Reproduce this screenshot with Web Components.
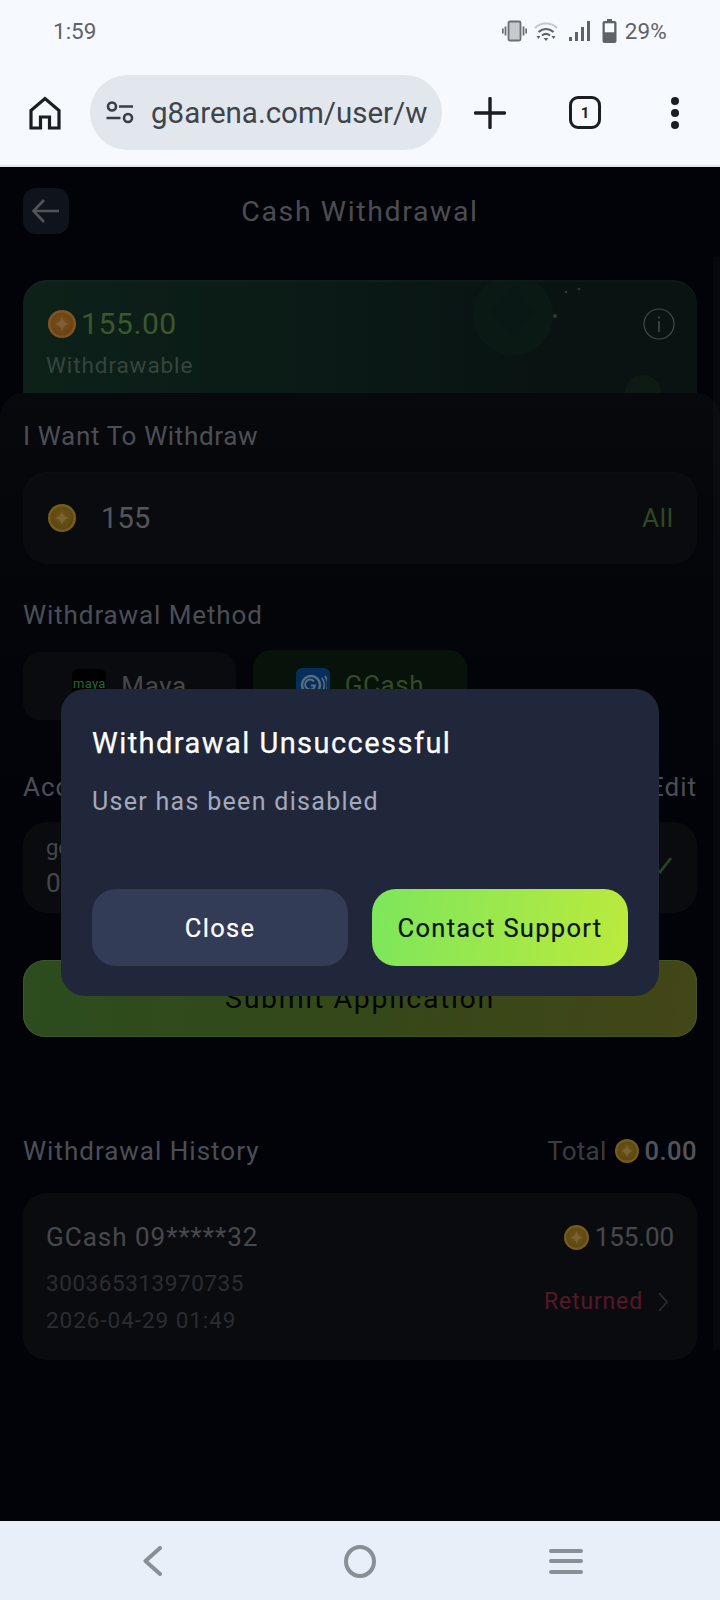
<!DOCTYPE html>
<html lang="en"><head><meta charset="utf-8"><title>Cash Withdrawal</title>
<style>
html,body{margin:0;padding:0;height:1600px;background:#040612;font-family:Roboto,"Noto Sans",sans-serif;overflow:hidden}
</style></head>
<body>
<phone-shell>
  <status-strip slot="status" time="1:59" battery="29%"></status-strip>
  <browser-bar slot="browser" url="g8arena.com/user/w"></browser-bar>
  <withdraw-page slot="page"></withdraw-page>
  <alert-dialog slot="dialog" heading="Withdrawal Unsuccessful" message="User has been disabled"></alert-dialog>
  <nav-strip slot="nav"></nav-strip>
</phone-shell>
<script>
const def=(name,html)=>{customElements.define(name,class extends HTMLElement{
  connectedCallback(){ if(this.shadowRoot) return; const r=this.attachShadow({mode:'open'});
    r.innerHTML=typeof html==='function'?html(this):html; }
});};

let coinId=0;
def('g-coin',el=>{const s=el.getAttribute('size')||28;const id='c'+(++coinId);const v=el.getAttribute('tone')||'gold';
 const a=v==='orange'?'#fcaa48':'#e8b83c', b=v==='orange'?'#f0a238':'#d8aa34', c=v==='orange'?'#d48020':'#b88c1c', d=v==='orange'?'#f8c078':'#eec864';
 return `<style>:host{display:inline-flex;flex:none;width:${s}px;height:${s}px}svg{width:100%;height:100%;display:block}</style>
 <svg viewBox="0 0 28 28"><defs><radialGradient id="${id}" cx=".5" cy=".45" r=".6"><stop offset="0" stop-color="${b}"/><stop offset="1" stop-color="${c}"/></radialGradient></defs>
 <circle cx="14" cy="14" r="14" fill="${a}"/><circle cx="14" cy="14" r="11.500" fill="url(#${id})"/>
 <path d="M14 7C15 11 17 13 21 14C17 15 15 17 14 21C13 17 11 15 7 14C11 13 13 11 14 7Z" fill="${d}"/></svg>`;});

def('phone-shell',`<style>
:host{display:flex;flex-direction:column;height:1600px;width:720px}
.main{flex:1;position:relative;overflow:hidden;min-height:0}
.scrim{position:absolute;inset:0;background:rgba(0,0,0,.5);display:flex;align-items:center;justify-content:center}
.bar{position:absolute;right:0;top:90px;bottom:171px;width:7px;background:rgba(255,255,255,.025)}
</style>
<slot name="status"></slot><slot name="browser"></slot>
<div class="main"><slot name="page"></slot><div class="scrim"><div class="bar"></div><slot name="dialog"></slot></div></div>
<slot name="nav"></slot>`);

def('status-strip',el=>`<style>
:host{display:flex;align-items:center;height:62px;background:#f6f9fe;font:400 22.500px Roboto,sans-serif;color:#5f6368;box-sizing:border-box;padding:0 53px 0 53px}
.sp{flex:1}.i{display:flex;align-items:center}svg{display:block}
.t{margin-left:8px;letter-spacing:.2px}
</style>
<span>${el.getAttribute('time')}</span><span class="sp"></span>
<span class="i">
<svg width="25" height="24" viewBox="0 0 25 24" style="margin-right:7px"><rect x="6.500" y="2.500" width="12" height="19" rx="1.500" fill="#c6c9cd" stroke="#6b6f74" stroke-width="1.800"/><path d="M3.500 7.500v9M.8 9.500v5M21.500 7.500v9M24.200 9.500v5" stroke="#6b6f74" stroke-width="1.800"/></svg>
<svg width="24" height="24" viewBox="0 0 24 24" style="margin-right:11px"><path d="M1 9C7 3 17 3 23 9" fill="none" stroke="#c4c7cb" stroke-width="2.200"/><path d="M4.500 13C9 9 15 9 19.500 13" fill="none" stroke="#5f6368" stroke-width="2.200"/><path d="M8 16.500C10.500 14.500 13.500 14.500 16 16.500" fill="none" stroke="#5f6368" stroke-width="2.200"/><path d="M9.500 19h5l-2.500 3zM2.500 17h4l-2 3zM17.500 17h4l-2 3z" fill="#5f6368"/></svg>
<svg width="22" height="22" viewBox="0 0 22 22" style="margin-right:11px"><rect x="0" y="17" width="3" height="4" fill="#5f6368"/><rect x="6" y="12" width="3" height="9" fill="#5f6368"/><rect x="12" y="7" width="3" height="14" fill="#5f6368"/><rect x="18" y="1" width="3" height="20" fill="#5f6368"/></svg>
<svg width="15" height="24" viewBox="0 0 15 24"><path d="M5 0h5v2h2.500A2 2 0 0 1 14.500 4v18a2 2 0 0 1-2 2h-10a2 2 0 0 1-2-2V4a2 2 0 0 1 2-2H5z" fill="#5f6368"/><rect x="2.800" y="4.300" width="9.400" height="9" fill="#f6f9fe"/></svg>
</span><span class="t">${el.getAttribute('battery')}</span>`);

def('browser-bar',el=>`<style>
:host{display:grid;grid-template-columns:90px 352px 96px 94px 86px;align-items:center;justify-items:center;height:105px;box-sizing:border-box;padding-bottom:2px;background:#f6f9fe;border-bottom:2px solid #e3e6ea;color:#1f2124}
.pill{justify-self:stretch;height:75px;border-radius:38px;background:#e2e7ed;display:flex;align-items:center;padding-left:16px;box-sizing:border-box;overflow:hidden;white-space:nowrap}
.u{font:400 29.500px Roboto,sans-serif;color:#3f444a;margin-left:17px;letter-spacing:0}
svg{display:block}
.tab{width:32px;height:33px;box-sizing:border-box;border:3.500px solid #1c1d20;border-radius:9px;display:flex;align-items:center;justify-content:center;font:700 15px Roboto,sans-serif}
</style>
<svg width="32" height="34" viewBox="0 0 32 34"><path d="M2 32V14.500L16 2.500L30 14.500V32H20.500V21H11.500V32Z" fill="none" stroke="#1c1d20" stroke-width="3.200" stroke-linejoin="miter"/></svg>
<div class="pill"><svg width="28" height="24" viewBox="0 0 28 24" style="flex:none"><circle cx="6" cy="5.500" r="4" fill="none" stroke="#3a3e44" stroke-width="2.600"/><path d="M13 5.500h14M0.500 17h14" stroke="#3a3e44" stroke-width="2.600"/><circle cx="22" cy="17" r="4" fill="none" stroke="#3a3e44" stroke-width="2.600"/></svg><span class="u">${el.getAttribute('url')}</span></div>
<svg width="32" height="32" viewBox="0 0 32 32"><path d="M16 1.500v29M1.500 16h29" stroke="#1c1d20" stroke-width="3.400" stroke-linecap="round"/></svg>
<div class="tab">1</div>
<svg width="10" height="34" viewBox="0 0 10 34"><circle cx="5" cy="5" r="4" fill="#1c1d20"/><circle cx="5" cy="17" r="4" fill="#1c1d20"/><circle cx="5" cy="29" r="4" fill="#1c1d20"/></svg>`);

def('nav-strip',`<style>
:host{display:grid;grid-template-columns:repeat(3,1fr);height:79px;background:#e8eff8;padding:0 137px 0 137px;box-sizing:border-box;align-items:center;justify-items:center}
svg{display:block}
</style>
<svg width="22" height="30" viewBox="0 0 22 30" style="justify-self:start;margin-left:5px;margin-top:1px"><path d="M18 2L3.500 15L18 28" fill="none" stroke="#8a8f96" stroke-width="4" stroke-linecap="round" stroke-linejoin="round"/></svg>
<svg width="32" height="33" viewBox="0 0 32 33" style="margin-top:1px"><ellipse cx="16" cy="16.500" rx="14" ry="14.500" fill="none" stroke="#8a8f96" stroke-width="4"/></svg>
<svg width="34" height="26" viewBox="0 0 34 26" style="justify-self:end;margin-top:1px"><path d="M2 3h30M2 13h30M2 24h30" stroke="#8a8f96" stroke-width="4" stroke-linecap="round"/></svg>`);

def('alert-dialog',el=>`<style>
:host{display:flex;flex-direction:column;width:598px;height:307px;box-sizing:border-box;padding:0 31px 30px;background:#20273b;border-radius:24px;margin-top:-3px;color:#fff}
.h{font-weight:400;font-size:29px;line-height:34px;margin-top:37px;letter-spacing:1.450px;-webkit-text-stroke:.25px #fff}
.m{font-size:25px;line-height:30px;margin-top:27px;color:#a4a9bb;letter-spacing:1.300px}
.a{margin-top:auto;display:grid;grid-template-columns:256px 256px;column-gap:24px;height:77px}
.b{display:flex;align-items:center;justify-content:center;border-radius:24px;font-size:25.500px;font-weight:400;letter-spacing:1.300px;-webkit-text-stroke:.2px currentColor}
.c{background:#323c57}.s{background:linear-gradient(100deg,#7ce65c,#bcea3c);color:#0b1410}
</style><div class="h">${el.getAttribute('heading')}</div><div class="m">${el.getAttribute('message')}</div>
<div class="a"><div class="b c">Close</div><div class="b s">Contact Support</div></div>`);

def('balance-card',`<style>
:host{display:block;position:relative;height:113px;margin:46px 23px 0;border-radius:24px 24px 0 0;overflow:hidden;background:linear-gradient(90deg,#1a4232,#16342c 45%,#122a26 70%,#122622);box-shadow:inset 0 2px 0 rgba(120,200,140,.08)}
.row{display:flex;align-items:center;gap:5px;padding:26px 23px 0 25px}
.v{font-size:30px;line-height:36px;color:#78ae58;letter-spacing:.6px}
.l{font-size:22.500px;line-height:26px;margin:10px 0 0 23px;color:#6a8a7c;letter-spacing:.9px}
.i{position:absolute;left:620px;top:28px;display:block}
.deco{position:absolute;left:0;top:0;pointer-events:none}
</style>
<svg class="deco" width="674" height="113" viewBox="0 0 674 113"><circle cx="490" cy="35" r="40" fill="#1e4230" opacity=".4"/><path d="M490 5L512 32L490 58L466 32Z" fill="#12302a" opacity=".7"/><circle cx="620" cy="113" r="18" fill="#264632" opacity=".5"/><circle cx="532" cy="36" r="2" fill="#4e7a62"/><circle cx="543" cy="12" r="1.300" fill="#4e7a62"/><circle cx="556" cy="9" r="1.300" fill="#4e7a62"/></svg>
<div class="row" style="position:relative"><g-coin size="28" tone="orange"></g-coin><span class="v">155.00</span></div>
<div class="l" style="position:relative">Withdrawable</div>
<svg class="i" width="32" height="32" viewBox="0 0 32 32"><circle cx="16" cy="16" r="15" fill="none" stroke="#7e9a8c" stroke-width="1.200"/><path d="M16 13v11" stroke="#7e9a8c" stroke-width="1.600"/><circle cx="16" cy="9.500" r="1.100" fill="#7e9a8c"/></svg>`);

def('field-label',`<style>:host{display:flex;justify-content:space-between;font-size:26px;line-height:30px;color:#969caa;letter-spacing:1px}</style><slot></slot>`);

def('amount-field',`<style>
:host{display:flex;align-items:center;height:92px;margin-top:21px;border-radius:24px;background:#14171f;box-shadow:inset 0 1px 0 rgba(255,255,255,.02);padding:0 23px 0 25px;box-sizing:border-box}
.v{font-size:29px;color:#a8abb2;margin-left:25px;letter-spacing:.2px;flex:1}.a{font-size:26px;color:#5f8f4a;letter-spacing:.8px}
</style><g-coin size="28"></g-coin><span class="v">155</span><span class="a">All</span>`);

def('method-tabs',`<style>
:host{display:grid;grid-template-columns:213px 214px;column-gap:17px;height:70px;margin-top:20px;font-size:26px;letter-spacing:.6px}
.t{display:flex;align-items:center;justify-content:center;gap:15px;border-radius:18px}
.a{background:#15171e;color:#8a8d94;margin-top:2px}.b{background:#0f2414;color:#62984c}
.l{width:34px;height:34px;border-radius:6px;display:flex;align-items:center;justify-content:center;overflow:hidden;box-sizing:border-box}
.m{background:#000;color:#3fd070;font-size:13px;letter-spacing:.3px;font-weight:400;padding-bottom:6px}.g{background:#0a5cb8}
</style>
<div class="t a"><span class="l m">maya</span>Maya</div>
<div class="t b"><span class="l g"><svg width="28" height="24" viewBox="0 0 28 24"><circle cx="12" cy="12" r="9" fill="none" stroke="#b6d8f4" stroke-width="2.400"/><path d="M15 8.500a5 5 0 1 0 1 4h-4" fill="none" stroke="#b6d8f4" stroke-width="2"/><path d="M23 5a12 12 0 0 1 0 14M26 3a16 16 0 0 1 0 18" fill="none" stroke="#b6d8f4" stroke-width="1.800"/></svg></span>GCash</div>`);

def('account-field',`<style>
:host{display:block;position:relative;height:91px;margin-top:20px;border-radius:24px;background:#15171e;padding:0 23px;box-sizing:border-box;color:#8a8d94}
.n{position:absolute;left:23px;top:13px;font-size:22px}.p{position:absolute;left:23px;top:46px;font-size:26px}
svg{position:absolute;right:24px;top:34px}
</style><span class="n">gcash</span><span class="p">09*****32</span>
<svg width="22" height="18" viewBox="0 0 22 18"><path d="M2 10l7 6L20 2" fill="none" stroke="#4a8a3c" stroke-width="2.800"/></svg>`);

def('submit-button',`<style>
:host{display:flex;align-items:center;justify-content:center;height:77px;margin-top:47px;border-radius:22px;background:linear-gradient(100deg,#589a3c,#6c9032 55%,#888c2c);color:#060a08;font-size:28.500px;letter-spacing:1.650px;box-shadow:inset 0 0 0 1px #7ab04c;box-sizing:border-box}
</style><slot></slot>`);

def('history-card',`<style>
:host{display:grid;grid-template-columns:1fr auto;height:167px;margin-top:27px;border-radius:24px;background:#15171e;padding:28px 23px 0;box-sizing:border-box;position:relative}
.n{font-size:26px;line-height:32px;color:#8e9198;letter-spacing:1px}
.s{font-size:22.500px;line-height:37px;color:#565960;letter-spacing:.55px;margin-top:12px}
.s div+div{letter-spacing:.95px}
.r{display:flex;flex-direction:column;align-items:flex-end}
.v{display:flex;align-items:center;gap:6px;font-size:26px;line-height:32px;color:#8e9198;letter-spacing:-.1px}
.st{display:flex;align-items:center;font-size:23px;color:#a83250;letter-spacing:.85px;margin-top:35px;margin-right:5px}
svg{margin-left:14px;display:block}
</style>
<div><div class="n">GCash 09*****32</div><div class="s"><div>300365313970735</div><div>2026-04-29 01:49</div></div></div>
<div class="r"><div class="v"><g-coin size="25"></g-coin>155.00</div><div class="st">Returned<svg width="12" height="22" viewBox="0 0 12 22"><path d="M2 2l8 9-8 9" fill="none" stroke="#55585f" stroke-width="1.800"/></svg></div></div>`);

def('withdraw-page',`<style>
:host{display:flex;flex-direction:column;height:100%;background:#040612}
.hd{display:flex;align-items:center;justify-content:center;position:relative;margin:21px 23px 0;height:46px;font-size:28.500px;color:#969aa2;letter-spacing:1.600px}
.bk{position:absolute;left:0;top:0;width:46px;height:46px;border-radius:13px;background:#1e2636;display:flex;align-items:center;justify-content:center}
.sheet{flex:1;background:linear-gradient(#0f1219,#0a0c14 12%,#040612 40%);padding:28px 23px 0;border-radius:24px 24px 0 0;}
.mt1{margin-top:36px}.mt2{margin-top:52px}.mt3{margin-top:99px}
.tot{display:flex;align-items:center}.tot g-coin{margin:0 5px 0 9px}.tot b{font-weight:500;color:#a4a8b0;letter-spacing:.5px;font-size:25.500px}
.tot span{color:#74777e;letter-spacing:.2px}
</style>
<div class="hd"><div class="bk"><svg width="30" height="26" viewBox="0 0 30 26"><path d="M28 13H3M13 2L2.500 13L13 24" fill="none" stroke="#a2a6ae" stroke-width="2.600"/></svg></div>Cash Withdrawal</div>
<balance-card></balance-card>
<div class="sheet">
<field-label style="letter-spacing:.65px">I Want To Withdraw</field-label>
<amount-field></amount-field>
<field-label class="mt1" style="letter-spacing:.9px">Withdrawal Method</field-label>
<method-tabs></method-tabs>
<field-label class="mt2"><span>Account</span><span>Edit</span></field-label>
<account-field></account-field>
<submit-button>Submit Application</submit-button>
<field-label class="mt3"><span>Withdrawal History</span><span class="tot"><span>Total</span><g-coin size="24"></g-coin><b>0.00</b></span></field-label>
<history-card></history-card>
</div>`);
</script>
</body></html>
